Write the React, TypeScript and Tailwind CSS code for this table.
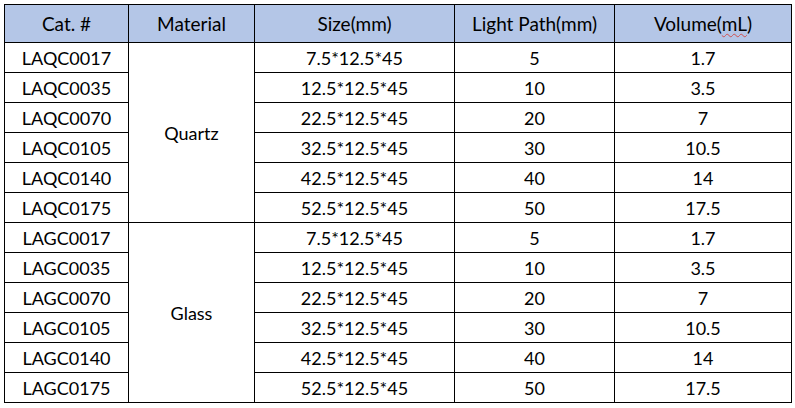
import React from 'react';

type Row = {
  cat: string;
  size: string;
  path: string;
  volume: string;
};

const quartz: Row[] = [
  { cat: 'LAQC0017', size: '7.5*12.5*45', path: '5', volume: '1.7' },
  { cat: 'LAQC0035', size: '12.5*12.5*45', path: '10', volume: '3.5' },
  { cat: 'LAQC0070', size: '22.5*12.5*45', path: '20', volume: '7' },
  { cat: 'LAQC0105', size: '32.5*12.5*45', path: '30', volume: '10.5' },
  { cat: 'LAQC0140', size: '42.5*12.5*45', path: '40', volume: '14' },
  { cat: 'LAQC0175', size: '52.5*12.5*45', path: '50', volume: '17.5' }
];

const glass: Row[] = [
  { cat: 'LAGC0017', size: '7.5*12.5*45', path: '5', volume: '1.7' },
  { cat: 'LAGC0035', size: '12.5*12.5*45', path: '10', volume: '3.5' },
  { cat: 'LAGC0070', size: '22.5*12.5*45', path: '20', volume: '7' },
  { cat: 'LAGC0105', size: '32.5*12.5*45', path: '30', volume: '10.5' },
  { cat: 'LAGC0140', size: '42.5*12.5*45', path: '40', volume: '14' },
  { cat: 'LAGC0175', size: '52.5*12.5*45', path: '50', volume: '17.5' }
];

const cell = 'border border-black text-center align-middle p-0';

function Group({ material, rows }: { material: string; rows: Row[] }) {
  return (
    <>
      {rows.map((row, i) => (
        <tr key={row.cat} className="h-[30px]">
          <td className={cell}>{row.cat}</td>
          {i === 0 && (
            <td className={cell} rowSpan={rows.length}>
              {material}
            </td>
          )}
          <td className={cell}>{row.size}</td>
          <td className={cell}>{row.path}</td>
          <td className={cell}>{row.volume}</td>
        </tr>
      ))}
    </>
  );
}

export default function App() {
  return (
    <div className="w-[795px] h-[408px] bg-white pt-1 pl-1 font-['Lato','Open_Sans',sans-serif] text-[18px] leading-none text-black">
      <table className="border-collapse border border-black table-fixed w-[787px]">
        <colgroup>
          <col className="w-[124px]" />
          <col className="w-[126px]" />
          <col className="w-[200px]" />
          <col className="w-[160px]" />
          <col className="w-[177px]" />
        </colgroup>
        <thead>
          <tr className="h-[38px] bg-[#b4c6e7] text-[19px]">
            <th className={`${cell} font-normal`}>Cat. #</th>
            <th className={`${cell} font-normal`}>Material</th>
            <th className={`${cell} font-normal`}>Size(mm)</th>
            <th className={`${cell} font-normal`}>Light Path(mm)</th>
            <th className={`${cell} font-normal`}>
              Volume(
              <span className="underline decoration-wavy decoration-[#d05050] decoration-1 underline-offset-2">mL</span>)
            </th>
          </tr>
        </thead>
        <tbody>
          <Group material="Quartz" rows={quartz} />
          <Group material="Glass" rows={glass} />
        </tbody>
      </table>
    </div>
  );
}
